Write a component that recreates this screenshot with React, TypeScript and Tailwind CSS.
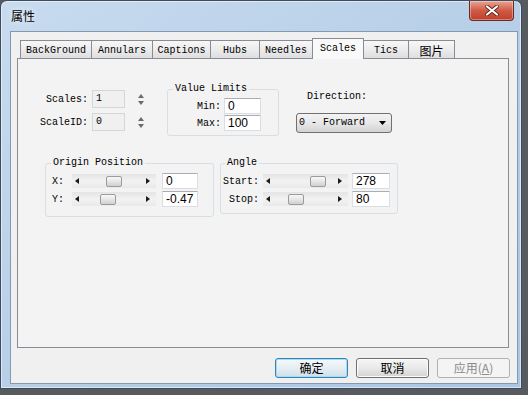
import React from 'react';

const MONO = "font-['Liberation_Mono','Courier_New',monospace] text-[10px] leading-[12px] text-black";
const SANS = "font-['Liberation_Sans',Arial,sans-serif] text-[12px] leading-[14px] text-black";
const CJK = "font-['Noto_Sans_CJK_SC','Liberation_Sans',sans-serif] text-[12px] leading-[14px]";

const tabs = [
  { label: 'BackGround', w: 'w-[71px]' },
  { label: 'Annulars', w: 'w-[61px]' },
  { label: 'Captions', w: 'w-[58px]' },
  { label: 'Hubs', w: 'w-[49px]' },
  { label: 'Needles', w: 'w-[53px]' },
  { label: 'Scales', w: 'w-[52px]', active: true },
  { label: 'Tics', w: 'w-[45px]' },
  { label: '图片', w: 'w-[47px]', cjk: true, last: true },
];

function Tri({ dir }: { dir: 'up' | 'down' | 'left' | 'right' }) {
  const pts = {
    up: '0,4 3,0 6,4',
    down: '0,0 6,0 3,4',
    left: '4,0 4,6 0,3',
    right: '0,0 0,6 4,3',
  }[dir];
  const horiz = dir === 'left' || dir === 'right';
  return (
    <svg width={horiz ? 4 : 6} height={horiz ? 6 : 4} viewBox={horiz ? '0 0 4 6' : '0 0 6 4'}>
      <polygon points={pts} fill={horiz ? '#1a1a1a' : '#6b6b6b'} />
    </svg>
  );
}

function Spin() {
  return (
    <div className="flex h-[18px] w-[9px] flex-col items-center justify-center gap-[3px]">
      <Tri dir="up" />
      <Tri dir="down" />
    </div>
  );
}

function Field({ value, w }: { value: string; w: string }) {
  return (
    <div className={`${w} flex h-[16px] items-center border border-[#dadde3] border-t-[#abadb3] bg-white pl-[3px] ${SANS}`}>
      {value}
    </div>
  );
}

function Slider({ pos, w }: { pos: number; w: string }) {
  return (
    <div className={`relative flex h-[14px] ${w} items-center justify-between pl-[3px] pr-[6px] bg-gradient-to-b from-[#e4e4e4] via-[#f2f2f2] to-[#e9e9e9]`}>
      <Tri dir="left" />
      <Tri dir="right" />
      {/* thumb */}
      <div
        className="absolute top-[2px] h-[11px] w-[16px] rounded-[2px] border border-[#9c9c9c] bg-gradient-to-b from-[#f8f8f8] via-[#e6e6e6] to-[#cfcfcf]"
        style={{ left: pos }}
      />
    </div>
  );
}

function Button({ children, kind }: { children: React.ReactNode; kind: 'default' | 'normal' | 'disabled' }) {
  const look = {
    default: 'border-[#3c7fb1] bg-gradient-to-b from-[#f4f9fc] via-[#e6eef3] to-[#cfdfea] shadow-[inset_0_0_0_1px_#9ee0f7] text-black',
    normal: 'border-[#707070] bg-gradient-to-b from-[#f6f6f6] via-[#e9e9e9] to-[#d3d3d3] shadow-[inset_0_0_0_1px_#fcfcfc] text-black',
    disabled: 'border-[#adb2b5] bg-[#f4f4f4] text-[#8a8a8a]',
  }[kind];
  return (
    <div className={`flex h-[20px] w-[73px] items-center justify-center rounded-[3px] border ${look} ${CJK}`}>
      {children}
    </div>
  );
}

export default function App() {
  return (
    <div className="h-[395px] w-[528px] overflow-hidden bg-[#575a5f]">
      {/* window frame */}
      <div className="relative h-[389px] w-[522px] rounded-t-[7px] border border-[#3e4c5d] bg-gradient-to-br from-[#c8dbef] via-[#b7cfe8] to-[#aac6e3] shadow-[inset_0_0_0_1px_rgba(255,255,255,0.5)]">
        {/* title bar */}
        <div className="flex h-[30px] items-start">
          <span className={`ml-[10px] mt-[8px] text-black ${CJK} [text-shadow:0_0_6px_rgba(255,255,255,0.95)]`}>属性</span>
        </div>
        <div className="absolute right-[7px] top-0 flex h-[20px] w-[45px] items-center justify-center rounded-b-[4px] border border-t-0 border-[#6b2a22] bg-gradient-to-b from-[#e8a493] via-[#cf5a45] to-[#c0402c] shadow-[inset_0_0_0_1px_rgba(255,255,255,0.35)]">
          <svg width="14" height="11" viewBox="0 0 14 11">
            <path d="M2 1.5 L12 9.5 M12 1.5 L2 9.5" stroke="#5b1c14" strokeWidth="3.6" strokeLinecap="round" />
            <path d="M2 1.5 L12 9.5 M12 1.5 L2 9.5" stroke="#ffffff" strokeWidth="2.2" strokeLinecap="round" />
          </svg>
        </div>

        {/* client area */}
        <div className="ml-[9px] h-[353px] w-[508px] border border-[#8399b0] bg-[#f0f0f0] pl-[6px] pt-[6px]">
          {/* tab strip */}
          <div className="ml-[3px] flex h-[20px] items-end">
            {tabs.map((t) => (
              <div
                key={t.label}
                className={
                  t.active
                    ? `relative z-10 -mb-px -mr-px flex h-[21px] ${t.w} items-start justify-center border border-b-0 border-[#898c95] bg-[#f9f9f9] pt-[4px] ${MONO}`
                    : `flex h-[18px] ${t.w} items-center justify-center border-t border-l ${t.last ? 'border-r' : ''} border-[#898c95] bg-gradient-to-b from-[#f7f7f7] via-[#ececec] to-[#dedede] pt-[2px] ${t.cjk ? `${CJK} text-black` : MONO}`
                }
              >
                {t.label}
              </div>
            ))}
          </div>

          {/* tab page */}
          <div className="h-[290px] w-[492px] border border-[#898c95] bg-[#f3f3f3]">
            {/* first row */}
            <div className="mt-[23px] flex items-start">
              {/* Scales / ScaleID */}
              <div className="ml-[18px] mt-[8px] flex flex-col gap-[5px]">
                {[
                  ['Scales:', '1'],
                  ['ScaleID:', '0'],
                ].map(([l, v]) => (
                  <div key={l} className="flex items-center">
                    <span className={`w-[52px] pt-[2px] text-right ${MONO}`}>{l}</span>
                    <div className={`ml-[4px] flex h-[18px] w-[33px] items-center border border-[#d3d6da] bg-[#f0f0f0] pl-[3px] ${MONO}`}>{v}</div>
                    <div className="ml-[11px]">
                      <Spin />
                    </div>
                  </div>
                ))}
              </div>

              {/* Value Limits */}
              <fieldset className="ml-[22px] mt-[1px] w-[112px] rounded-[3px] border border-[#d5dfe5] pb-[4px] pt-[3px]">
                <legend className={`ml-[5px] px-[2px] ${MONO}`}>Value Limits</legend>
                <div className="flex flex-col gap-[1px]">
                  {[
                    ['Min:', '0'],
                    ['Max:', '100'],
                  ].map(([l, v]) => (
                    <div key={l} className="flex items-center">
                      <span className={`w-[53px] pt-[1px] text-right ${MONO}`}>{l}</span>
                      <div className="ml-[3px]">
                        <Field value={v} w="w-[37px]" />
                      </div>
                    </div>
                  ))}
                </div>
              </fieldset>

              {/* Direction */}
              <div className="ml-[17px] mt-[9px] flex flex-col">
                <span className={`ml-[11px] ${MONO}`}>Direction:</span>
                <div className={`mt-[10px] flex h-[20px] w-[96px] items-center justify-between rounded-[3px] border border-[#707070] bg-gradient-to-b from-[#f3f3f3] via-[#e8e8e8] to-[#d2d2d2] pl-[2px] pr-[5px] ${MONO}`}>
                  <span>0 - Forward</span>
                  <svg width="7" height="4" viewBox="0 0 7 4">
                    <polygon points="0,0 7,0 3.5,4" fill="#000" />
                  </svg>
                </div>
              </div>
            </div>

            {/* second row */}
            <div className="mt-[21px] flex items-start">
              {/* Origin Position */}
              <fieldset className="ml-[27px] w-[169px] rounded-[3px] border border-[#d5dfe5] pb-[9px] pt-[4px]">
                <legend className={`ml-[5px] px-[2px] ${MONO}`}>Origin Position</legend>
                <div className="flex flex-col gap-[2px]">
                  {[
                    { l: 'X:', v: '0', pos: 34 },
                    { l: 'Y:', v: '-0.47', pos: 28 },
                  ].map((r) => (
                    <div key={r.l} className="flex items-center">
                      <span className={`w-[26px] pl-[6px] pt-[1px] ${MONO}`}>{r.l}</span>
                      <Slider pos={r.pos} w="w-[84px]" />
                      <div className="ml-[6px]">
                        <Field value={r.v} w="w-[36px]" />
                      </div>
                    </div>
                  ))}
                </div>
              </fieldset>

              {/* Angle */}
              <fieldset className="ml-[6px] w-[178px] rounded-[3px] border border-[#d5dfe5] pb-[6px] pt-[4px]">
                <legend className={`ml-[4px] px-[2px] ${MONO}`}>Angle</legend>
                <div className="flex flex-col gap-[2px]">
                  {[
                    { l: 'Start:', v: '278', pos: 47 },
                    { l: 'Stop:', v: '80', pos: 25 },
                  ].map((r) => (
                    <div key={r.l} className="flex items-center">
                      <span className={`w-[38px] pt-[1px] text-right ${MONO}`}>{r.l}</span>
                      <div className="ml-[4px]">
                        <Slider pos={r.pos} w="w-[85px]" />
                      </div>
                      <div className="ml-[4px]">
                        <Field value={r.v} w="w-[38px]" />
                      </div>
                    </div>
                  ))}
                </div>
              </fieldset>
            </div>
          </div>

          {/* dialog buttons */}
          <div className="mt-[10px] flex justify-end gap-[8px] pr-[7px]">
            <Button kind="default">确定</Button>
            <Button kind="normal">取消</Button>
            <Button kind="disabled">
              应用(<span className="underline">A</span>)
            </Button>
          </div>
        </div>
      </div>
    </div>
  );
}
